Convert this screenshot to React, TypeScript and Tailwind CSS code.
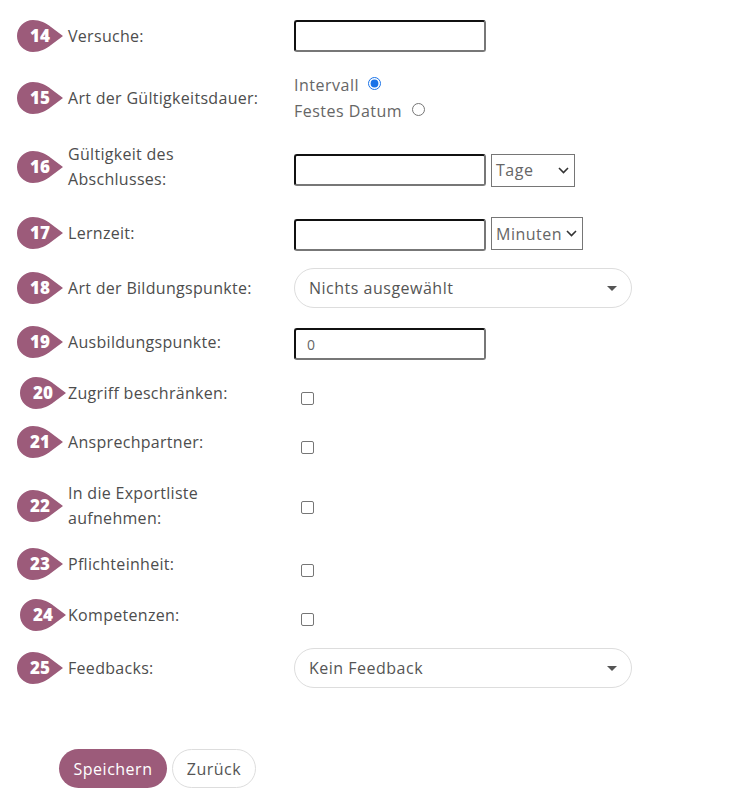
import React from 'react'

const font = { fontFamily: '"Open Sans", "Liberation Sans", sans-serif' }

function Badge({ n, shift = 0 }: { n: number; shift?: number }) {
  return (
    <div className={`relative shrink-0 w-[46px] h-[32px] ${shift ? 'ml-[3px] mr-[-3px]' : ''}`}>
      <svg width="46" height="32" viewBox="0 0 46 32" className="absolute inset-0">
        <path
          d="M16 0 C23 0 29 3 34 7 L46 16 L34 25 C29 29 23 32 16 32 A16 16 0 0 1 16 0 Z"
          fill="#9c5b7a"
        />
      </svg>
      <span className="absolute left-[7px] w-[32px] top-0 h-[32px] flex items-center justify-center text-white font-extrabold text-[17px] tracking-normal">
        {n}
      </span>
    </div>
  )
}

function TextInput({ value = '' }: { value?: string }) {
  return (
    <div className="w-[192px] h-[32px] border-2 border-t-[#111] border-l-[#111] border-b-[#777] border-r-[#777] rounded-[3px] flex items-center pl-[11px] text-[14px] text-[#666]">
      {value}
    </div>
  )
}

function NativeSelect({ label, w }: { label: string; w: string }) {
  return (
    <div className={`${w} h-[33px] border border-[#767676] flex items-center justify-between pl-[4px] pr-[5px] text-[16px] text-[#666]`}>
      <span>{label}</span>
      <svg width="11" height="7" viewBox="0 0 11 7">
        <path d="M1 1 L5.5 5.5 L10 1" stroke="#333" strokeWidth="1.6" fill="none" />
      </svg>
    </div>
  )
}

function Pill({ label }: { label: string }) {
  return (
    <div className="w-[338px] h-[40px] rounded-full border border-[#ddd] flex items-center justify-between pl-[14px] pr-[14px] text-[16px] text-[#555]">
      <span>{label}</span>
      <svg width="10" height="5" viewBox="0 0 10 5">
        <path d="M0 0 H10 L5 5 Z" fill="#555" />
      </svg>
    </div>
  )
}

function Check({ mt = 'mt-[10px]' }: { mt?: string }) {
  return <div className={`ml-[7px] ${mt} w-[13px] h-[13px] rounded-[2px] border border-[#767676] bg-white`} />
}

function Row({
  n,
  label,
  shift,
  className,
  children,
}: {
  n: number
  label: React.ReactNode
  shift?: number
  className: string
  children: React.ReactNode
}) {
  return (
    <div className={`flex items-center h-[44px] ${className}`}>
      <div className="w-[294px] shrink-0 flex items-center gap-[5px] pl-[17px]">
        <Badge n={n} shift={shift} />
        <div className="text-[16px] leading-[25px] font-medium tracking-[0.3px] text-[#4d4d4d]">{label}</div>
      </div>
      <div className="flex items-center">{children}</div>
    </div>
  )
}

export default function App() {
  return (
    <div className="w-[748px] h-[803px] bg-white pt-[14px] tracking-[0.5px]" style={font}>
      <Row n={14} label="Versuche:" className="">
        <TextInput />
      </Row>

      <Row n={15} label="Art der Gültigkeitsdauer:" className="mt-[18px]">
        <div className="text-[16px] leading-[26px] text-[#666]">
          <div className="flex items-center">
            Intervall
            <input type="radio" name="art" defaultChecked className="ml-[9px] w-[13px] h-[13px] mb-[4px] accent-[#1a73e8]" />
          </div>
          <div className="flex items-center">
            Festes Datum
            <input type="radio" name="art" className="ml-[10px] w-[13px] h-[13px] mb-[4px]" />
          </div>
        </div>
      </Row>

      <Row n={16} label={<>Gültigkeit des<br />Abschlusses:</>} className="mt-[25px]">
        <div className="flex items-start gap-[5px] mt-[6px]">
          <TextInput />
          <NativeSelect label="Tage" w="w-[84px]" />
        </div>
      </Row>

      <Row n={17} label="Lernzeit:" className="mt-[22px]">
        <div className="flex items-start gap-[5px] mt-[2px]">
          <div className="mt-[2px]">
            <TextInput />
          </div>
          <NativeSelect label="Minuten" w="w-[92px]" />
        </div>
      </Row>

      <Row n={18} label="Art der Bildungspunkte:" className="mt-[11px]">
        <Pill label="Nichts ausgewählt" />
      </Row>

      <Row n={19} label="Ausbildungspunkte:" className="mt-[10px]">
        <div className="mt-[4px]">
          <TextInput value="0" />
        </div>
      </Row>

      <Row n={20} label="Zugriff beschränken:" shift={4} className="mt-[7px]">
        <Check />
      </Row>

      <Row n={21} label="Ansprechpartner:" className="mt-[5px]">
        <Check />
      </Row>

      <Row n={22} label={<>In die Exportliste<br />aufnehmen:</>} className="mt-[20px]">
        <Check mt="mt-[2px]" />
      </Row>

      <Row n={23} label="Pflichteinheit:" className="mt-[14px]">
        <Check mt="mt-[12px]" />
      </Row>

      <Row n={24} label="Kompetenzen:" shift={4} className="mt-[7px]">
        <Check mt="mt-[8px]" />
      </Row>

      <Row n={25} label="Feedbacks:" className="mt-[9px]">
        <Pill label="Kein Feedback" />
      </Row>

      <div className="flex gap-[5px] pl-[59px] mt-[59px]">
        <button className="w-[108px] h-[39px] rounded-full bg-[#9c5b7a] text-white text-[16px]">Speichern</button>
        <button className="w-[84px] h-[39px] rounded-full border border-[#ddd] bg-white text-[#555] text-[16px]">Zurück</button>
      </div>
    </div>
  )
}
